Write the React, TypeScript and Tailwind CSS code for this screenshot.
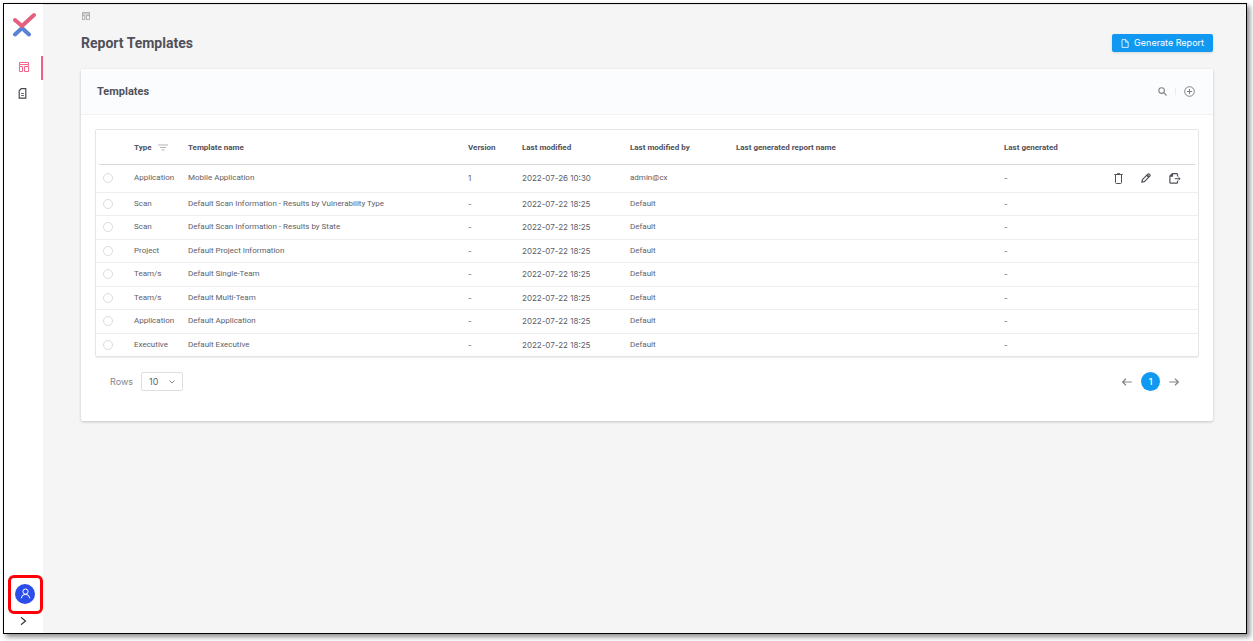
import React, { useState } from 'react';

interface Template {
  type: string;
  name: string;
  version: string;
  modified: string;
  modifiedBy: string;
  reportName: string;
  generated: string;
  custom?: boolean;
}

const templates: Template[] = [
  { type: 'Application', name: 'Mobile Application', version: '1', modified: '2022-07-26 10:30', modifiedBy: 'admin@cx', reportName: '', generated: '-', custom: true },
  { type: 'Scan', name: 'Default Scan Information - Results by Vulnerability Type', version: '-', modified: '2022-07-22 18:25', modifiedBy: 'Default', reportName: '', generated: '-' },
  { type: 'Scan', name: 'Default Scan Information - Results by State', version: '-', modified: '2022-07-22 18:25', modifiedBy: 'Default', reportName: '', generated: '-' },
  { type: 'Project', name: 'Default Project Information', version: '-', modified: '2022-07-22 18:25', modifiedBy: 'Default', reportName: '', generated: '-' },
  { type: 'Team/s', name: 'Default Single-Team', version: '-', modified: '2022-07-22 18:25', modifiedBy: 'Default', reportName: '', generated: '-' },
  { type: 'Team/s', name: 'Default Multi-Team', version: '-', modified: '2022-07-22 18:25', modifiedBy: 'Default', reportName: '', generated: '-' },
  { type: 'Application', name: 'Default Application', version: '-', modified: '2022-07-22 18:25', modifiedBy: 'Default', reportName: '', generated: '-' },
  { type: 'Executive', name: 'Default Executive', version: '-', modified: '2022-07-22 18:25', modifiedBy: 'Default', reportName: '', generated: '-' },
];

const Logo = () => (
  <svg className="h-[25px] w-6" viewBox="0 0 24 25" fill="none" strokeWidth="4" strokeLinecap="round">
    <path d="M3 22.5L10 16L17 22.5" stroke="#5a83d6" strokeLinejoin="round" />
    <path d="M3 8L10 14L22 3" stroke="#e4607f" strokeLinejoin="round" />
  </svg>
);

const TemplateIcon = ({ className }: { className: string }) => (
  <svg className={className} viewBox="0 0 10 10" fill="none" stroke="currentColor">
    <path d="M0.5 0.5H9.5V2.5H0.5ZM0.5 4.5H3.5V9.5H0.5ZM5.5 4.5H9.5V9.5H5.5ZM0.5 2.5V4.5M9.5 2.5V4.5" />
  </svg>
);

const ReportIcon = () => (
  <svg className="h-[11px] w-[9px]" viewBox="0 0 9 11" fill="none" stroke="currentColor">
    <path d="M3.2 0.7H7.8V10.2H1.2V2.8Z" strokeWidth="1.2" />
    <path d="M3 5.5H6M3 7.5H6" strokeWidth="0.8" />
  </svg>
);

const TrashIcon = () => (
  <svg className="h-[11px] w-[9px]" viewBox="0 0 9 11" fill="none" stroke="currentColor">
    <path d="M0.3 1.5H8.7M3 0.7H6M1.5 1.5V9.5Q1.5 10.5 2.5 10.5H6.5Q7.5 10.5 7.5 9.5V1.5" />
  </svg>
);

const PencilIcon = () => (
  <svg className="h-[10px] w-[10px]" viewBox="0 0 10 10" fill="none" stroke="currentColor">
    <path d="M0.8 9.2L1.4 6.6L6.8 1.2Q7.5 0.5 8.3 1.2L8.8 1.7Q9.5 2.5 8.8 3.2L3.4 8.6Z" strokeWidth="1.2" strokeLinejoin="round" />
    <path d="M5.9 2L8 4.1" strokeWidth="1.8" />
  </svg>
);

const ExportIcon = () => (
  <svg className="h-[11px] w-3" viewBox="0 0 12 11" fill="none" stroke="currentColor">
    <path d="M8.5 3.6V1.4Q8.5 0.7 7.8 0.7H3.4L0.9 3.1V9.4Q0.9 10.2 1.7 10.2H7.8Q8.5 10.2 8.5 9.4V7.8M3.5 0.9V3.2H1.1" strokeWidth="1.2" />
    <path d="M5.8 5.7H11M9.4 4L11.1 5.7L9.4 7.4" />
  </svg>
);

const ArrowRight = () => (
  <svg className="h-2 w-[10px]" viewBox="0 0 10 8" fill="none" stroke="currentColor" strokeWidth="1.2">
    <path d="M0.3 4H9.3M6 0.8L9.3 4L6 7.2" />
  </svg>
);

const ArrowLeft = () => (
  <svg className="h-2 w-[10px]" viewBox="0 0 10 8" fill="none" stroke="currentColor" strokeWidth="1.2">
    <path d="M9.7 4H0.7M4 0.8L0.7 4L4 7.2" />
  </svg>
);

export default function App() {
  const [selected, setSelected] = useState<number | null>(null);

  return (
    <div className="flex min-h-screen bg-white pt-[3px] pr-[6px] pb-[7px] pl-[3px] font-['Roboto','Liberation_Sans',sans-serif] text-[8px] leading-3 text-[#606068]">
      <div className="flex flex-1 border border-black bg-[#f5f5f5] shadow-[3px_3px_5px_rgba(0,0,0,0.45)]">
        <aside className="flex w-[39px] shrink-0 flex-col bg-white">
          <a href="#home" aria-label="Home" className="mt-2 ml-2 w-6"><Logo /></a>
          <nav className="mt-[19px] flex flex-col">
            <a href="#templates" aria-label="Report templates" className="flex h-6 items-center border-r-2 border-[#ee5f85] pb-[2px] pl-[15px] text-[#f2668b]">
              <TemplateIcon className="h-[10px] w-[10px]" />
            </a>
            <a href="#reports" aria-label="Reports" className="flex h-[26px] items-center pl-[14px] text-[#4a4a52]"><ReportIcon /></a>
          </nav>
          <div className="mt-auto flex flex-col">
            <button type="button" aria-label="Account" className="ml-1 flex h-[39px] w-[35px] items-center justify-center rounded-md border-3 border-[#fb0007] pr-px pb-[2px]">
              <span className="flex h-5 w-5 shrink-0 items-center justify-center rounded-full bg-[#2c4ee8] text-white">
                <svg className="h-[11px] w-[11px]" viewBox="0 0 11 11" fill="none" stroke="currentColor">
                  <circle cx="5.5" cy="3.6" r="2.6" />
                  <path d="M1.2 10.3Q1.6 6.4 5.5 6.3Q9.4 6.4 9.8 10.3" />
                </svg>
              </span>
            </button>
            <button type="button" aria-label="Expand menu" className="flex h-[19px] items-center pb-[5px] pl-4 text-[#333]">
              <svg className="h-2 w-[7px]" viewBox="0 0 7 8" fill="none" stroke="currentColor" strokeWidth="1.2">
                <path d="M1 0.3L5.5 4L1 7.7" />
              </svg>
            </button>
          </div>
        </aside>

        <main className="min-w-0 flex-1 border-t border-[#e4e4e4] pt-[7px] pr-[33px] pl-[38px]">
          <a href="#templates" aria-label="Templates" className="block w-3 text-[#98989e]">
            <TemplateIcon className="ml-px h-2 w-2" />
          </a>
          <div className="mt-[13px] flex h-5 items-center justify-between">
            <h1 className="text-[14px] leading-5 font-bold text-[#50505a]">Report Templates</h1>
            <button type="button" className="flex h-[18px] items-center gap-[5px] rounded-xs bg-[#1199f2] px-[9px] font-['Inter','Liberation_Sans',sans-serif] text-[9px] text-white shadow-sm">
              <svg className="h-[9px] w-2" viewBox="0 0 8 9" fill="none" stroke="currentColor" strokeWidth="0.8">
                <path d="M1 0.6H4.8L7.2 3V8.4H1ZM4.6 0.6V3.2H7.2" />
              </svg>
              Generate Report
            </button>
          </div>

          <section className="mt-4 rounded-xs bg-white shadow-[0_1px_3px_rgba(0,0,0,0.2)]">
            <header className="flex h-[46px] items-center justify-between border-b border-[#f0f1f3] bg-[#fbfcfe] pr-[18px] pl-4">
              <h2 className="text-[11px] leading-4 font-bold text-[#50505a]">Templates</h2>
              <div className="flex items-center gap-2 text-[#808087]">
                <button type="button" aria-label="Search">
                  <svg className="h-[9px] w-[9px]" viewBox="0 0 9 9" fill="none" stroke="currentColor" strokeWidth="1.1">
                    <circle cx="3.6" cy="3.6" r="2.8" />
                    <path d="M5.7 5.7L8.5 8.5" />
                  </svg>
                </button>
                <span className="h-[7px] w-px bg-[#ececef]" />
                <button type="button" aria-label="Add template">
                  <svg className="h-[11px] w-[11px]" viewBox="0 0 11 11" fill="none" stroke="currentColor">
                    <circle cx="5.5" cy="5.5" r="4.8" />
                    <path d="M3 5.5H8M5.5 3V8" />
                  </svg>
                </button>
              </div>
            </header>

            <div className="px-[14px] pt-[14px] pb-[30px]">
              <div className="rounded-xs border border-[#e6e6e8] shadow-[0_1px_1px_rgba(0,0,0,0.08)]">
                <table className="w-full table-fixed border-collapse text-left">
                  <colgroup>
                    <col className="w-[38px]" />
                    <col className="w-[54px]" />
                    <col />
                    <col className="w-[54px]" />
                    <col className="w-[108px]" />
                    <col className="w-[106px]" />
                    <col className="w-[268px]" />
                    <col className="w-[110px]" />
                    <col className="w-[84px]" />
                  </colgroup>
                  <thead className="relative after:absolute after:inset-x-[3px] after:bottom-0 after:h-px after:bg-[#d9d9db]">
                    <tr className="h-[35px] text-[#50505a] [&>th]:p-0 [&>th]:font-bold">
                      <th aria-label="Select" />
                      <th>
                        <span className="flex items-center gap-[6px]">
                          Type
                          <button type="button" aria-label="Filter by type" className="text-[#b5b5ba]">
                            <svg className="h-[7px] w-[10px]" viewBox="0 0 10 7" fill="none" stroke="currentColor">
                              <path d="M0 1H10M2 3.5H8M3.5 6H6.5" />
                            </svg>
                          </button>
                        </span>
                      </th>
                      <th>Template name</th>
                      <th>Version</th>
                      <th>Last modified</th>
                      <th>Last modified by</th>
                      <th>Last generated report name</th>
                      <th>Last generated</th>
                      <th aria-label="Actions" />
                    </tr>
                  </thead>
                  <tbody>
                    {templates.map((item, idx) => (
                      <tr key={idx} className={'border-b border-[#eeeeef] last:border-b-0 [&>td]:p-0 ' + (item.custom ? 'h-[27px]' : 'odd:h-6 even:h-[23px]')}>
                        <td>
                          <input
                            type="radio"
                            name="template"
                            aria-label={item.name}
                            checked={selected === idx}
                            onChange={() => setSelected(idx)}
                            className="ml-[7px] block h-[10px] w-[10px] appearance-none rounded-full border border-[#dcdcdf] bg-white checked:bg-[#1199f2]"
                          />
                        </td>
                        <td>{item.type}</td>
                        <td>{item.name}</td>
                        <td className="font-['Inter','Liberation_Sans',sans-serif]">{item.version}</td>
                        <td className="font-['Inter','Liberation_Sans',sans-serif]">{item.modified}</td>
                        <td>{item.modifiedBy}</td>
                        <td>{item.reportName}</td>
                        <td className="font-['Inter','Liberation_Sans',sans-serif]">{item.generated}</td>
                        <td>
                          {item.custom && (
                            <div className="flex items-center gap-[18px] text-[#50505a]">
                              <button type="button" aria-label="Delete"><TrashIcon /></button>
                              <button type="button" aria-label="Edit"><PencilIcon /></button>
                              <button type="button" aria-label="Export"><ExportIcon /></button>
                            </div>
                          )}
                        </td>
                      </tr>
                    ))}
                  </tbody>
                </table>
              </div>

              <div className="mt-[15px] flex items-center justify-between pr-5 pl-[15px] font-['Inter','Liberation_Sans',sans-serif] text-[9px] text-[#85858c]">
                <div className="flex items-center gap-2">
                  <label htmlFor="rows">Rows</label>
                  <div className="relative">
                    <select id="rows" defaultValue="10" className="block h-[19px] w-[42px] appearance-none rounded-xs border border-[#dfdfe2] bg-white pl-[7px] text-[9px] text-[#66666d]">
                      <option>10</option>
                      <option>20</option>
                      <option>50</option>
                    </select>
                    <svg className="pointer-events-none absolute top-2 right-2 h-1 w-[6px] text-[#85858c]" viewBox="0 0 6 4" fill="none" stroke="currentColor">
                      <path d="M0.5 0.5L3 3L5.5 0.5" />
                    </svg>
                  </div>
                </div>
                <div className="flex items-center gap-[9px]">
                  <button type="button" aria-label="Previous page"><ArrowLeft /></button>
                  <button type="button" aria-current="page" className="h-[19px] w-[19px] rounded-full bg-[#1199f2] font-medium text-white">1</button>
                  <button type="button" aria-label="Next page"><ArrowRight /></button>
                </div>
              </div>
            </div>
          </section>
        </main>
      </div>
    </div>
  );
}
